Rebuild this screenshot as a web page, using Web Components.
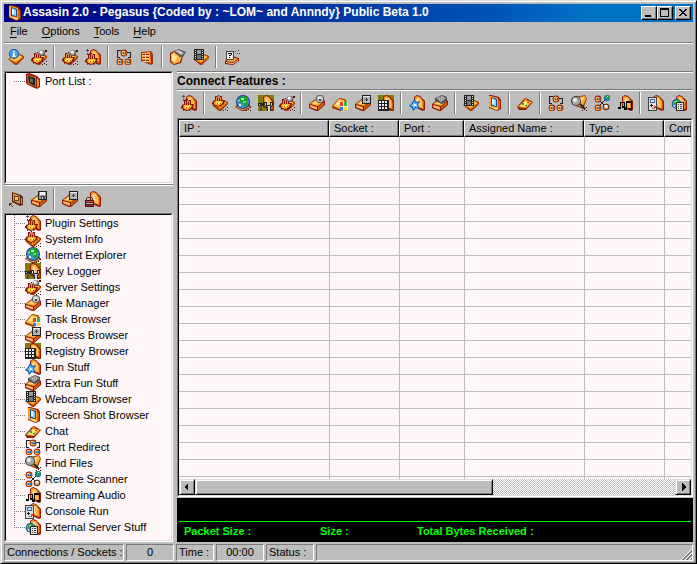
<!DOCTYPE html>
<html lang="en">
<head>
<meta charset="utf-8">
<title>Assasin 2.0</title>
<style>
  html, body { margin: 0; height: 100%; }
  body {
    --face: #bdbdbd; --shade: #7b7b7b; --light: #ffffff; --paper: #fff7f7;
    font: 11px/16px "Liberation Sans", Arial, sans-serif; color: #000; background: #bdbdbd;
  }
</style>
</head>
<body>
<app-window></app-window>
<script>
const poly = (p, f) => `<polygon points="${p}" fill="${f}"/>`;
const box = (x, y, w, h, f) => `<rect x="${x}" y="${y}" width="${w}" height="${h}" fill="${f}"/>`;
const line = (d, c, w = 1) => `<path d="${d}" fill="none" stroke="${c}" stroke-width="${w}"/>`;
const disc = (x, y, r, f) => `<circle cx="${x}" cy="${y}" r="${r}" fill="${f}"/>`;
const move = (x, y, s) => `<g transform="translate(${x} ${y})">${s}</g>`;

const slab = poly('0,10 9,4 16,7 16,9 9,16 7,16', '#a53900') + poly('1,10 9,5 15,8 8,14', '#f79c10') + poly('2,10 9,5 14,8 8,12', '#ffc642') + poly('4,9 9,6 11,7 6,10', '#ffe794');
const door = poly('5,2 8,0 11,1 16,6 16,15 14,16 5,12', '#8c1800') + poly('6,2 8,1 11,2 14,6 14,14 6,11', '#f79421') + poly('7,3 9,2 12,4 13,7 13,13 7,10', '#ffbd5a') + poly('8,3 10,4 10,10 8,9', '#ffdea5') + poly('14,6 15,6 15,14 14,15', '#ce5208');
const block = poly('0,9 8,3 14,4 16,6 16,10 9,16 7,16 0,13', '#8c1800') + poly('1,9 8,4 15,6 9,11', '#ffad29') + poly('3,9 8,5 12,6 7,9', '#ffd684') + poly('1,10 8,12 8,15 1,12', '#ffa552') + poly('2,11 7,12.5 7,13.5 2,12', '#ffde9c') + poly('9,12 15,7 15,10 9,15', '#ce5a08');
const paw = poly('0,8 2,5 3,6 3,1 5,1 5,4 6,0 7,0 8,4 8,1 10,1 10,5 13,5 12,8 13,9 10,10 9,12 7,11 6,13 4,11 2,12 2,10 0,9', '#841000') + poly('2,8 3,6 11,6 10,9 8,10 6,11 4,10 3,10', '#ffb518') + box(4, 2, 1, 4, '#ff8c21') + box(6, 1, 1, 5, '#ad947b') + box(8, 2, 1, 4, '#ff8c21') + box(4, 7, 5, 2, '#ffef73') + box(5, 8, 1, 1, '#c64200') + box(8, 8, 1, 1, '#c64200');
const globe = disc(8, 7, 7, '#183984') + disc(8, 7, 6, '#4294de') + poly('5,2 8,1 12,2 13,5 12,6 13,9 10,12 8,10 8,8 5,8 3,6', '#18a529') + box(6, 3, 3, 2, '#b5ffc6') + box(8, 6, 3, 2, '#63de6b') + box(4, 9, 2, 2, '#d6f7ff') + box(3, 5, 2, 1, '#bde7ff');
const node = disc(3, 3, 3.4, '#842100') + disc(3, 3, 2.6, '#ef7b21') + box(1, 1, 2, 1, '#ffd684') + box(2, 2, 3, 2, '#216bad') + box(3, 2, 1, 1, '#9cdeff') + box(1, 4, 3, 1, '#ffb54a');
const wrench = box(0, 8, 6, 3, '#212121') + box(2, 10, 2, 6, '#4a4a4a') + box(1, 9, 1, 1, '#bdbdbd') + poly('6,7 9,7 9,10 12,10 12,7 15,7 15,10 13,13 13,16 9,16 9,13 6,10', '#212121') + poly('7,8 8,8 8,11 13,11 13,8 14,8 14,10 12,12 12,16 10,16 10,12 7,10', '#d6d6d6');
const lens = line('M9 9l5 5', '#212121', 2) + disc(5, 6, 5, '#393939') + disc(5, 6, 4, '#a5a5a5') + disc(4, 5, 2, '#efefef');
const film = box(0, 0, 10, 11, '#212121') + box(3, 1, 4, 4, '#9c9c9c') + box(3, 6, 4, 4, '#737373') + [1, 3, 5, 7, 9].map(y => box(1, y, 1, 1, '#dedede') + box(8, y, 1, 1, '#dedede')).join('');
const disk = box(0, 0, 9, 9, '#212121') + box(1, 1, 7, 7, '#949494') + box(2, 1, 5, 3, '#fff') + box(3, 5, 4, 3, '#424242') + box(4, 6, 1, 2, '#dedede');
const vault = box(0, 0, 9, 9, '#212121') + box(1, 1, 7, 7, '#b5b5b5') + box(1, 1, 7, 1, '#e7e7e7') + box(4, 3, 1, 3, '#212121') + box(3, 4, 3, 1, '#525252');
const spark = box(2, 0, 1, 3, '#525252') + box(1, 1, 3, 1, '#525252') + box(2, 4, 1, 2, '#525252') + box(4, 4, 1, 1, '#525252');
const grit = box(15, 12, 1, 1, '#421000') + box(13, 14, 1, 1, '#421000') + box(11, 15, 1, 1, '#421000') + box(15, 15, 1, 1, '#421000');
const orb = box(14, 1, 2, 2, '#421000') + box(13, 3, 1, 1, '#421000') + disc(11, 4, 3, '#525252') + disc(10.5, 3.5, 2.2, '#c6c6c6') + box(9, 2, 2, 2, '#fff');

const icons = {
  app: poly('3,0 5,0 13,2 15,5 15,14 11,16 3,13', '#8c1800') + poly('3,1 5,1 12,3 12,15 3,12', '#ffa531') + poly('5,2 11,4 11,12 5,11', '#21427b') + poly('6,3 10,5 10,11 6,10', '#8cd6ff') + poly('6,4 8,4 8,9 6,9', '#e7f7ff') + poly('12,4 14,6 14,13 12,15', '#d66308') + poly('4,12 11,13 12,14 10,15', '#ffde7b'),
  info: slab + disc(6, 5, 5, '#184a8c') + disc(6, 5, 4, '#4aa5ef') + box(5, 2, 2, 1, '#fff') + box(5, 4, 2, 3, '#fff') + box(4, 7, 4, 1, '#fff'),
  server: slab + move(0, 3, paw) + orb + grit,
  plugin: door + move(0, 4, paw) + spark,
  system: slab + move(0, 0, paw) + grit,
  internet: poly('0,12 4,8 13,8 16,12 10,16 7,16', '#8c1800') + poly('1,12 8,9 15,12 9,15 7,15', '#ffad42') + globe + grit,
  key: box(0, 0, 16, 16, '#847b00') + door + wrench,
  file: block + disc(11, 4, 4, '#525252') + disc(11, 4, 3.2, '#bdbdbd') + box(9, 2, 3, 2, '#efefef') + box(10, 4, 2, 2, '#424242'),
  task: poly('0,11 7,3 13,4 16,9 16,13 8,16 0,13', '#a53900') + poly('1,11 7,4 12,5 15,11 8,14', '#ffbd39') + poly('3,10 7,5 10,6 6,11', '#ffe794') + box(8, 7, 8, 8, '#e7e7e7') + box(8, 7, 3, 4, '#ef3929') + box(12, 7, 3, 4, '#31bd39') + box(8, 12, 3, 3, '#3173e7') + box(12, 12, 3, 3, '#ffde10'),
  process: block + move(7, 0, vault),
  registry: box(0, 0, 16, 16, '#847b00') + door + box(0, 5, 11, 11, '#212121') + [6, 9, 12].map(y => [1, 4, 7].map(x => box(x, y, 2, 2, '#efefef')).join('')).join(''),
  fun: door + poly('5,4 7,7 11,6 9,10 11,14 7,13 4,16 3,13 0,11 3,8', '#0863b5') + poly('5,6 6.500,8.500 9,8 8,10 9,13 6.500,11.500 4.500,14 4,11.500 1.500,10.500 4,9', '#7bceff') + box(5, 9, 2, 2, '#fff'),
  extra: block + poly('3,3 10,0 15,2 15,6 10,9 3,6', '#525252') + poly('4,3 10,1 14,3 9,7', '#b5b5b5') + box(6, 3, 1, 1, '#6b6b6b') + box(8, 2, 1, 1, '#6b6b6b') + box(10, 3, 1, 1, '#6b6b6b') + box(8, 4, 1, 1, '#6b6b6b') + box(12, 2, 1, 1, '#6b6b6b'),
  webcam: slab + move(1, 0, film),
  chat: poly('0,12 7,4 9,3 16,7 9,15 2,15', '#8c2100') + poly('1,12 8,5 15,7 9,13', '#ffb531') + poly('3,11 8,6 12,7 7,12', '#ffe773') + box(5, 8, 2, 2, '#29a55a') + box(10, 7, 2, 1, '#ef3118') + box(8, 10, 2, 1, '#218c42') + poly('6,5 8,3 11,5', '#de7b18'),
  redirect: box(1, 1, 1, 8, '#212121') + box(1, 1, 4, 1, '#212121') + box(1, 8, 3, 1, '#212121') + box(11, 3, 4, 1, '#212121') + box(14, 3, 1, 6, '#212121') + box(12, 8, 3, 1, '#212121') + move(5, 1, node) + move(1, 10, node) + move(9, 10, node),
  find: poly('5,2 14,0 16,4 12,14 5,11', '#a53900') + poly('5,3 14,1 15,4 11,12 6,10', '#ffad29') + poly('8,3 13,2 11,6 9,7', '#ffe78c') + lens + grit,
  scanner: line('M5 5l6 6M11 5l-6 6', '#212121') + move(1, 1, node) + move(10, 0, disc(3, 3, 3.2, '#2173bd') + poly('1,1 4,0 6,3 3,5', '#29ad31') + box(3, 1, 1, 1, '#d6ffd6')) + move(1, 10, node) + move(9, 9, disc(3, 3, 3.3, '#5a2908') + disc(3, 3, 2.3, '#bdbdbd') + box(2, 1, 2, 2, '#fff') + box(1, 4, 4, 1, '#ef8410')),
  audio: door + box(3, 7, 5, 1, '#000') + box(3, 7, 1, 6, '#000') + box(7, 7, 1, 5, '#000') + box(9, 6, 6, 2, '#000') + box(9, 6, 1, 8, '#000') + box(14, 6, 1, 8, '#000') + box(1, 12, 3, 2, '#000') + box(5, 11, 3, 2, '#000') + box(7, 13, 3, 2, '#000') + box(12, 13, 3, 2, '#000'),
  console: door + box(0, 2, 9, 14, '#424242') + box(1, 3, 7, 12, '#dedede') + box(2, 4, 5, 4, '#426b9c') + box(3, 5, 3, 2, '#bde7ff') + box(2, 10, 3, 1, '#212121') + box(3, 9, 1, 3, '#212121') + box(6, 11, 2, 2, '#ef3118') + box(4, 13, 3, 1, '#848484'),
  external: door + move(0, 4, `<g transform="scale(.7)">${globe}</g>`) + box(5, 7, 8, 9, '#212121') + box(6, 8, 6, 7, '#e7e7e7') + [9, 11, 13].map(y => box(7, y, 1, 1, '#424242') + box(9, y, 2, 1, '#424242')).join(''),
  port: poly('1,1 4,0 12,3 15,6 15,14 12,16 3,12 1,10', '#8c1800') + poly('2,2 11,4 11,14 3,11', '#d67321') + poly('3,3 10,5 10,13 4,10', '#182121') + poly('5,5 8,6 8,10 5,9', '#5a6b6b') + poly('12,5 14,7 14,13 12,15', '#f79431'),
  panel: poly('2,3 12,2 14,5 14,15 12,16 2,12', '#a53108') + poly('3,4 11,3 12,14 3,11', '#ffa53a') + [5, 8, 11].map(y => box(4, y, 2, 1, '#8c1800') + box(7, y, 3, 1, '#8c1800') + box(4, y + 1, 6, 1, '#ffde9c')).join(''),
  folder: poly('0,4 4,2 8,4 14,4 11,14 4,16 0,13', '#8c1800') + poly('1,5 4,3 8,6 12,7 10,13 4,15 1,12', '#ffb542') + poly('2,6 4,5 7,8 5,13 2,11', '#ffe79c') + poly('4,2 9,0 16,3 13,8 9,8 8,5', '#5a5a5a') + poly('5,2 9,1 14,4 11,6', '#c6c6c6'),
  help: poly('1,12 8,7 15,9 15,12 9,16 1,15', '#8c1800') + poly('2,12 8,8 14,10 9,13', '#ffb542') + poly('2,13 9,14 14,11 14,12 9,15 2,14', '#ffd68c') + box(2, 2, 8, 9, '#424242') + box(3, 3, 6, 7, '#efefef') + box(4, 4, 4, 1, '#000') + box(7, 5, 1, 1, '#000') + box(5, 6, 2, 1, '#000') + box(5, 8, 1, 1, '#000') + box(11, 2, 1, 1, '#942108') + box(14, 1, 1, 1, '#942108') + box(13, 4, 1, 1, '#942108') + box(15, 4, 1, 1, '#942108'),
  shortcut: poly('4,1 13,4 15,6 15,14 12,15 4,11', '#5a2108') + poly('5,2 12,5 12,13 5,10', '#bd944a') + box(6, 5, 5, 5, '#6b4210') + box(7, 6, 3, 3, '#ffc652') + box(1, 12, 3, 1, '#942108') + box(1, 12, 1, 3, '#942108') + box(2, 13, 1, 1, '#942108') + box(3, 14, 1, 1, '#942108') + box(4, 15, 1, 1, '#942108') + box(13, 7, 1, 6, '#ef8c21'),
  save: block + move(7, 0, disk),
  lock: door + box(2, 6, 5, 1, '#424242') + box(1, 7, 1, 3, '#424242') + box(7, 7, 1, 3, '#424242') + box(0, 9, 9, 7, '#421010') + box(1, 10, 7, 1, '#ef5252') + box(1, 12, 7, 1, '#c6c6c6') + box(1, 14, 7, 1, '#ad2929'),
};
icons.screen = icons.app;

const define = (name, markup, ready) => {
  const tpl = document.createElement('template');
  tpl.innerHTML = markup;
  customElements.define(name, class extends HTMLElement {
    connectedCallback() {
      if (this.shadowRoot) return;
      this.attachShadow({ mode: 'open' }).append(tpl.content.cloneNode(true));
      if (ready) ready(this, this.shadowRoot);
    }
  });
};

define('px-icon', `<style>:host{display:block;width:16px;height:16px;flex:none}svg{display:block}</style>
<svg width="16" height="16" viewBox="0 0 16 16" aria-hidden="true"></svg>`,
  (el, root) => { root.querySelector('svg').innerHTML = icons[el.getAttribute('name')]; });

define('tool-bar', `<style>
  :host{display:flex;align-items:center;height:27px;box-sizing:border-box;padding-bottom:2px}
  button{width:23px;height:22px;padding:0;border:0;background:none;display:grid;place-items:center;flex:none}
  button.slim{width:20px}
  i{width:0;height:22px;margin:0 3px;border-left:1px solid var(--shade);border-right:1px solid var(--light);flex:none}
</style>`, (el, root) => {
  for (const group of el.getAttribute('items').split('|')) {
    if (root.querySelector('button')) root.append(document.createElement('i'));
    for (const name of group.trim().split(' ')) {
      const b = document.createElement('button');
      b.type = 'button'; b.setAttribute('aria-label', name);
      if (el.getAttribute('slim') === name) b.className = 'slim';
      b.innerHTML = `<px-icon name="${name}"></px-icon>`;
      root.append(b);
    }
  }
});

define('tree-item', `<style>
  :host{display:flex;align-items:center;height:16px;margin-left:8px}
  .stem{align-self:stretch;width:11px;flex:none;
    background:repeating-linear-gradient(90deg,#848484 0 1px,transparent 1px 2px) 0 8px/11px 1px no-repeat,
    repeating-linear-gradient(#848484 0 1px,transparent 1px 2px) 0 0/1px var(--stem,16px) no-repeat}
  :host(:last-of-type){--stem:8px}
  :host([single]){--stem:0px}
  span{margin-left:4px;white-space:nowrap}
</style><div class="stem"></div><px-icon></px-icon><span><slot></slot></span>`,
  (el, root) => {
    const icon = document.createElement('px-icon');
    icon.setAttribute('name', el.getAttribute('icon'));
    root.querySelector('px-icon').replaceWith(icon);
  });

define('sunken-box', `<style>
  :host{display:block;box-sizing:border-box;background:var(--paper);border:1px solid;border-color:var(--shade) var(--light) var(--light) var(--shade);min-height:0}
  div{box-sizing:border-box;height:100%;border:1px solid;border-color:#000 #dedede #dedede #000;overflow:hidden}
</style><div><slot></slot></div>`);

define('title-bar', `<style>
  :host{display:flex;align-items:center;height:18px;padding:0 2px;color:#fff;background:linear-gradient(90deg,#000084,#0052b5 70%,#0073c6 85%)}
  h1{margin:0 0 0 1px;font:bold 12px/16px "Liberation Sans",Arial,sans-serif;flex:1;white-space:nowrap;height:18px}
  button{width:16px;height:14px;padding:0;border:1px solid;border-color:#fff #000 #000 #fff;background:var(--face);box-shadow:inset -1px -1px var(--shade);display:block}
  button:last-child{margin-left:2px}
  svg{display:block}
</style><px-icon name="app"></px-icon><h1><slot></slot></h1>
<button type="button" aria-label="Minimize"><svg width="14" height="12" shape-rendering="crispEdges"><path d="M3 8h6v2H3z"/></svg></button>
<button type="button" aria-label="Maximize"><svg width="14" height="12" shape-rendering="crispEdges"><path d="M2 1h9v9H2zM3 3v6h7V3z" fill-rule="evenodd"/></svg></button>
<button type="button" aria-label="Close"><svg width="14" height="12" shape-rendering="crispEdges"><path d="M3 2h2v1h1v1h2V3h1V2h2v1h-1v1H9v1H8v1h1v1h1v1h1v1H9V8H8V7H6v1H5v1H3V8h1V7h1V6h1V5H5V4H4V3H3z"/></svg></button>`);

define('menu-bar', `<style>
  :host{display:flex;align-items:flex-start;height:20px;padding-left:6px;gap:14px;border-bottom:1px solid var(--shade);box-shadow:0 1px var(--light);margin-bottom:1px}
  button{border:0;padding:0;background:none;font:inherit;color:inherit;line-height:18px}
  u{text-underline-offset:2px}
</style><button type="button"><u>F</u>ile</button><button type="button"><u>O</u>ptions</button><button type="button"><u>T</u>ools</button><button type="button"><u>H</u>elp</button>`);

define('connection-grid', `<style>
  :host{display:flex;flex-direction:column;height:100%}
  .view{flex:1;overflow:hidden;min-height:0}
  table{table-layout:fixed;border-collapse:separate;border-spacing:0;width:100%}
  .c1{width:150px}.c2{width:70px}.c3{width:65px}.c4{width:120px}.c5{width:80px}
  th{height:17px;box-sizing:border-box;padding:0 0 1px 4px;text-align:left;font-weight:normal;line-height:14px;background:var(--face);
    border:1px solid;border-color:#fff #000 #000 #fff;box-shadow:inset -1px -1px var(--shade);white-space:nowrap}
  th:last-child{border-right:0;padding-right:0}
  td{height:17px;box-sizing:border-box;padding:0;border:solid #bdbdbd;border-width:0 0 1px 1px}
  td:first-child{border-left:0}
  .bar{display:flex;height:16px;background:repeating-conic-gradient(#bdbdbd 0 25%,#fff 0 50%) 0 0/2px 2px}
  .bar button,.thumb{box-sizing:border-box;border:1px solid;border-color:#dedede #000 #000 #dedede;background:var(--face);box-shadow:inset 1px 1px #fff,inset -1px -1px var(--shade)}
  .bar button{width:16px;padding:0;display:grid;place-items:center;flex:none}
  .track{flex:1}.thumb{width:62%;height:100%}
</style>
<div class="view"><table><colgroup><col class="c1"><col class="c2"><col class="c3"><col class="c4"><col class="c5"><col></colgroup>
<thead><tr><th>IP :</th><th>Socket :</th><th>Port :</th><th>Assigned Name :</th><th>Type :</th><th>Com</th></tr></thead><tbody></tbody></table></div>
<div class="bar"><button type="button" aria-label="Scroll left"><svg width="8" height="8" shape-rendering="crispEdges"><path d="M5 0v8L1 4z"/></svg></button>
<div class="track"><div class="thumb"></div></div>
<button type="button" aria-label="Scroll right"><svg width="8" height="8" shape-rendering="crispEdges"><path d="M3 0v8l4-4z"/></svg></button></div>`,
  (el, root) => { root.querySelector('tbody').innerHTML = ('<tr>' + '<td></td>'.repeat(6) + '</tr>').repeat(80); });

define('traffic-panel', `<style>
  :host{display:block;height:44px;background:#000;color:#0f0;font-weight:bold;padding:0 2px}
  .graph{height:23px;border-bottom:1px solid #0f0}
  .row{display:grid;grid-template-columns:136px 97px 1fr;padding-left:5px;line-height:19px;white-space:nowrap}
</style><div class="graph"></div><div class="row"><span>Packet Size :</span><span>Size :</span><span>Total Bytes Received :</span></div>`);

define('status-bar', `<style>
  :host{display:grid;grid-template-columns:120px 48px 38px 48px 48px 1fr;gap:2px;height:17px}
  span{box-sizing:border-box;border:1px solid;border-color:var(--shade) var(--light) var(--light) var(--shade);line-height:15px;padding:0 2px;white-space:nowrap}
  .mid{text-align:center}
  .last{display:flex;justify-content:flex-end;align-items:flex-end;padding:0}
</style><span>Connections / Sockets :</span><span class="mid">0</span><span>Time :</span><span class="mid">00:00</span><span>Status :</span>
<span class="last"><svg width="12" height="12" aria-hidden="true"><path d="M1 12L12 1M5 12l7-7M9 12l3-3" stroke="#fff"/><path d="M2 12L12 2M3 12l9-9M6 12l6-6M7 12l5-5M10 12l2-2" stroke="#7b7b7b"/></svg></span>`);

define('app-window', `<style>
  :host{display:flex;flex-direction:column;box-sizing:border-box;height:100vh;min-height:420px;padding:3px 3px 2px;background:var(--face);
    border:1px solid;border-color:#dedede #000 #000 #dedede;box-shadow:inset 1px 1px #fff,inset -1px -1px var(--shade)}
  main{flex:1;display:grid;grid-template-columns:169px minmax(0,1fr);gap:4px;min-height:0}
  .side,.content{display:flex;flex-direction:column;min-height:0;min-width:0}
  .ports{height:113px;flex:none}
  .side tool-bar{border-top:1px solid var(--shade);box-shadow:inset 0 1px var(--light);height:29px;flex:none;padding-bottom:0}
  .tree,.grid{flex:1}
  h2{margin:0;font:bold 12px/18px "Liberation Sans",Arial,sans-serif;border:solid var(--shade);border-width:1px 0;box-shadow:inset 0 1px var(--light),0 1px var(--light);height:17px}
  .content tool-bar{height:28px;flex:none}
  status-bar{margin-top:2px}
  traffic-panel{margin-top:1px;flex:none}
</style>
<title-bar>Assasin 2.0 - Pegasus {Coded by : ~LOM~ and Annndy} Public Beta 1.0</title-bar>
<menu-bar></menu-bar>
<tool-bar items="info server|server plugin|redirect panel|folder webcam|help"></tool-bar>
<main>
  <div class="side">
    <sunken-box class="ports"><tree-item single icon="port">Port List :</tree-item></sunken-box>
    <tool-bar items="shortcut save|process lock"></tool-bar>
    <sunken-box class="tree"><div class="list">
      <tree-item icon="plugin">Plugin Settings</tree-item><tree-item icon="system">System Info</tree-item>
      <tree-item icon="internet">Internet Explorer</tree-item><tree-item icon="key">Key Logger</tree-item>
      <tree-item icon="server">Server Settings</tree-item><tree-item icon="file">File Manager</tree-item>
      <tree-item icon="task">Task Browser</tree-item><tree-item icon="process">Process Browser</tree-item>
      <tree-item icon="registry">Registry Browser</tree-item><tree-item icon="fun">Fun Stuff</tree-item>
      <tree-item icon="extra">Extra Fun Stuff</tree-item><tree-item icon="webcam">Webcam Browser</tree-item>
      <tree-item icon="screen">Screen Shot Browser</tree-item><tree-item icon="chat">Chat</tree-item>
      <tree-item icon="redirect">Port Redirect</tree-item><tree-item icon="find">Find Files</tree-item>
      <tree-item icon="scanner">Remote Scanner</tree-item><tree-item icon="audio">Streaming Audio</tree-item>
      <tree-item icon="console">Console Run</tree-item><tree-item icon="external">External Server Stuff</tree-item>
    </div></sunken-box>
  </div>
  <div class="content">
    <h2>Connect Features :</h2>
    <tool-bar slim="server" items="plugin|system internet key server|file task process registry|fun extra|webcam screen|chat|redirect find scanner audio|console external"></tool-bar>
    <sunken-box class="grid"><connection-grid></connection-grid></sunken-box>
    <traffic-panel></traffic-panel>
  </div>
</main>
<status-bar></status-bar>`);
</script>
</body>
</html>
